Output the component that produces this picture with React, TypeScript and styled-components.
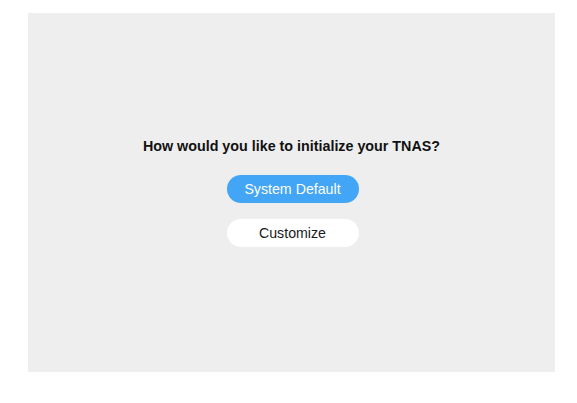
import React from "react";
import styled, { createGlobalStyle } from "styled-components";

const Global = createGlobalStyle`
  html, body { margin: 0; padding: 0; background: #ffffff; }
  body { font-family: "Liberation Sans", Arial, sans-serif; }
`;

const Page = styled.div`
  width: 577px;
  height: 403px;
  padding: 13px 22px 31px 28px;
  box-sizing: border-box;
  display: flex;
`;

const Panel = styled.div`
  flex: 1;
  background: #eeeeee;
  display: flex;
  flex-direction: column;
  align-items: center;
  justify-content: center;
`;

const Title = styled.h1`
  margin: 0 0 21px 0;
  font-size: 14.3px;
  line-height: 16px;
  font-weight: 700;
  color: #111111;
`;

const Actions = styled.div`
  display: flex;
  flex-direction: column;
  gap: 16px;
  margin-left: 2px;
`;

const Button = styled.button<{ $primary?: boolean }>`
  width: 132px;
  height: 28px;
  border: none;
  border-radius: 14px;
  padding: 0;
  font-family: "Liberation Sans", Arial, sans-serif;
  font-size: 14.2px;
  cursor: pointer;
  background: ${(p) => (p.$primary ? "#42a5f5" : "#ffffff")};
  color: ${(p) => (p.$primary ? "#ffffff" : "#1a1a1a")};
`;

export default function App() {
  return (
    <>
      <Global />
      <Page>
        <Panel>
          <Title>How would you like to initialize your TNAS?</Title>
          <Actions>
            <Button $primary>System Default</Button>
            <Button>Customize</Button>
          </Actions>
        </Panel>
      </Page>
    </>
  );
}
